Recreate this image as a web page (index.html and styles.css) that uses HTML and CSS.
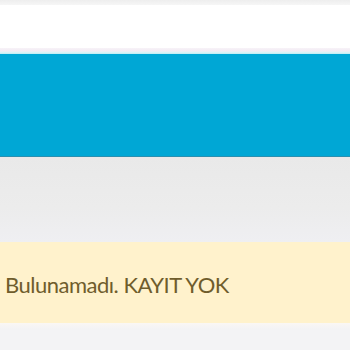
FILE: index.html
```html
<!DOCTYPE html>
<html lang="tr">
<head>
<meta charset="utf-8">
<link rel="stylesheet" href="styles.css">
</head>
<body>
<div class="topstrip"></div>
<div class="header"></div>
<div class="header-line"></div>
<div class="hero"></div>
<div class="gap"></div>
<div class="alert"><span class="msg">Bulunamadı. KAYIT YOK</span></div>
<div class="footer"></div>
</body>
</html>
```
FILE: styles.css
```css
html, body { margin: 0; padding: 0; }
body { background: #f4f4f5; width: 350px; height: 350px; overflow: hidden; font-family: "Lato", "Open Sans", sans-serif; }
.topstrip { height: 5px; background: linear-gradient(#eeeeee, #f6f6f6); }
.header { height: 43px; background: #ffffff; }
.header-line { height: 6px; background: linear-gradient(#f7f3f8 0, #f3eaf3 50%, #dff5f8 70%, #bfeaf2 100%); }
.hero { height: 102px; background: #00a7d5; border-bottom: 1px solid #2a8fb0; }
.gap { height: 85px; background: linear-gradient(#e9e9e9, #ececec 60%, #efeff2); }
.alert { height: 81px; background: #fff2cc; display: flex; align-items: center; padding: 4px 0 0 5px; box-sizing: border-box; }
.msg { color: #6f5d2c; font-size: 22px; white-space: nowrap; letter-spacing: -0.5px; }
.footer { height: 27px; background: linear-gradient(#faf7f4, #f3f3f5 6px); }
```
